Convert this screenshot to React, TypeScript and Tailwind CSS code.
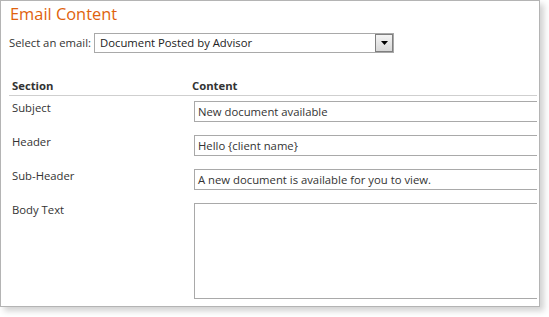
import React from "react";

const font = { fontFamily: '"Segoe UI", "Open Sans", "Noto Sans", sans-serif' };

function Row({ label, value, tall }: { label: string; value?: string; tall?: boolean }) {
  return (
    <div className="flex">
      <div className="w-[185px] shrink-0 pl-[3px] text-[11.3px] leading-[14px] text-[#333]">{label}</div>
      <div
        className={
          "w-[400px] shrink-0 border border-[#a9a9a9] bg-white text-[11.3px] text-[#333] px-[3px] " +
          (tall ? "h-[96px]" : "h-[21px] leading-[19px]")
        }
      >
        {value}
      </div>
    </div>
  );
}

export default function App() {
  return (
    <div className="w-[549px] h-[317px] bg-white" style={font}>
      <div className="w-[540px] h-[307px] border border-[#b4b4b4] bg-white shadow-[4px_4px_6px_rgba(0,0,0,0.18)] pl-[8px] pr-[2px]">
        <div className="w-full h-full overflow-hidden">
          <div className="text-[16.4px] leading-[24px] text-[#e0620d] pt-[1px] pl-[1px]">Email Content</div>
          <div className="flex items-center mt-[7px] h-[20px]">
            <span className="text-[11.3px] text-[#333] pr-[3px]">Select an email:</span>
            <div className="flex h-[20px] w-[300px] shrink-0 border border-[#a9a9a9]">
              <div className="flex-1 text-[11.3px] leading-[18px] text-[#222] pl-[5px]">Document Posted by Advisor</div>
              <div className="w-[18px] h-[18px] border border-[#7f7f7f] bg-gradient-to-b from-[#f4f4f4] to-[#d8d8d8] flex items-center justify-center">
                <svg width="7" height="4" viewBox="0 0 7 4">
                  <path d="M0 0 H7 L3.5 4 Z" fill="#000" />
                </svg>
              </div>
            </div>
          </div>
          <div className="flex mt-[26px] border-b border-[#cfcfcf] h-[15px] text-[11.3px] font-bold text-[#333] leading-[14px] box-content pb-[1px]">
            <div className="w-[183px] shrink-0 pl-[3px]">Section</div>
            <div>Content</div>
          </div>
          <div className="flex flex-col gap-[13px] mt-[5px]">
            <Row label="Subject" value="New document available" />
            <Row label="Header" value="Hello {client name}" />
            <Row label="Sub-Header" value="A new document is available for you to view." />
            <Row label="Body Text" tall />
          </div>
        </div>
      </div>
    </div>
  );
}
